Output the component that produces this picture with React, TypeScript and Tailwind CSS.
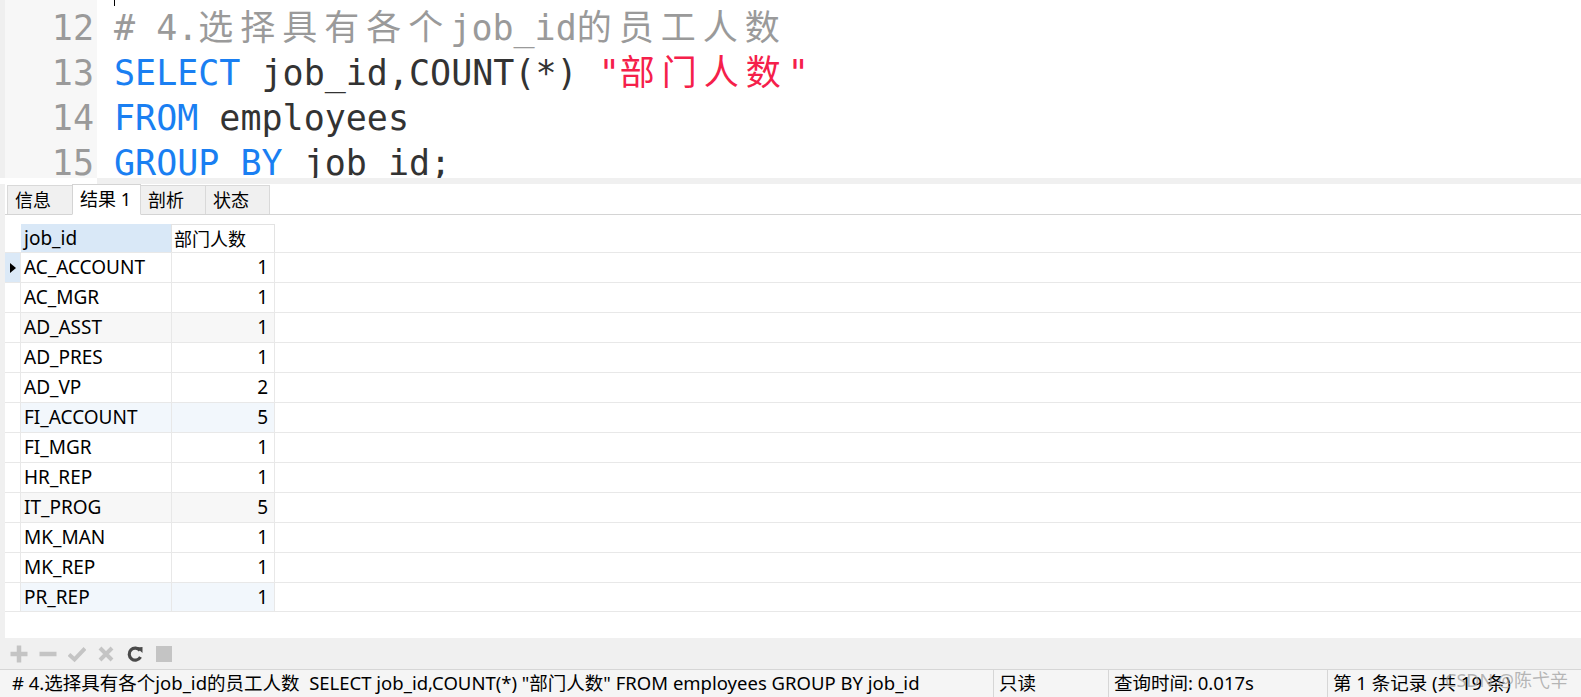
import React from "react";

const rows: [string, number][] = [
  ["AC_ACCOUNT", 1],
  ["AC_MGR", 1],
  ["AD_ASST", 1],
  ["AD_PRES", 1],
  ["AD_VP", 2],
  ["FI_ACCOUNT", 5],
  ["FI_MGR", 1],
  ["HR_REP", 1],
  ["IT_PROG", 5],
  ["MK_MAN", 1],
  ["MK_REP", 1],
  ["PR_REP", 1],
];

const rowBg = (i: number) => {
  if (i % 3 !== 2) return "bg-white";
  return i % 6 === 2 ? "bg-[#f7f7f7]" : "bg-[#f2f7fc]";
};

const Cjk = ({ children }: { children: React.ReactNode }) => (
  <span className="tracking-[7px]">{children}</span>
);

const mono = "font-['DejaVu_Sans_Mono','Noto_Sans_CJK_SC',monospace]";
const ui = "font-['Noto_Sans','Noto_Sans_CJK_SC',sans-serif]";

const Tab = ({ label, w, active }: { label: string; w: string; active?: boolean }) => (
  <div
    className={
      active
        ? `${w} h-[31px] -mb-px -ml-px pl-[7px] bg-white border border-[#d4d4d4] border-b-white flex items-center text-[18px] text-black`
        : `${w} h-[29px] -ml-px first:ml-0 pl-[7px] bg-[#f0f0f0] border border-b-0 border-[#d9d9d9] flex items-center text-[18px] text-black`
    }
  >
    {label}
  </div>
);

const ToolIcon = ({ children }: { children: React.ReactNode }) => (
  <svg width="18" height="18" viewBox="0 0 18 18" className="shrink-0">
    {children}
  </svg>
);

export default function App() {
  return (
    <div className={`w-[1581px] h-[697px] flex flex-col overflow-hidden bg-white ${ui}`}>
      {/* BEGIN: Editor */}
      <div className={`h-[178px] flex overflow-hidden ${mono} text-[35px] leading-[45px]`}>
        <div className="w-[5px] bg-[#efefef]" />
        <div className="w-[92px] bg-[#f7f7f7] pt-[6px] pr-[3px] text-right text-[#9a9a9a]">
          <div>12</div>
          <div>13</div>
          <div>14</div>
          <div>15</div>
        </div>
        <div className="relative flex-1 pt-[6px] pl-[17px] whitespace-pre text-[#333333]">
          <div className="absolute left-[17px] top-0 w-px h-[6px] bg-black" />
          <div className="text-[#9a9a9a]">
            # 4.<Cjk>选择具有各个</Cjk>job_id<Cjk>的员工人数</Cjk>
          </div>
          <div>
            <span className="text-[#1a7ff2]">SELECT</span> job_id,COUNT(*){" "}
            <span className="text-[#f5204a]">
              "<Cjk>部门人数</Cjk>"
            </span>
          </div>
          <div>
            <span className="text-[#1a7ff2]">FROM</span> employees
          </div>
          <div>
            <span className="text-[#1a7ff2]">GROUP BY</span> job_id;
          </div>
        </div>
      </div>
      <div className="h-[6px] flex">
        <div className="w-[97px] bg-white" />
        <div className="flex-1 bg-[#f0f0f0]" />
      </div>
      {/* END: Editor */}

      {/* BEGIN: Result panel */}
      <div className="h-[454px] flex">
        <div className="w-[5px] bg-[#f0f0f0]" />
        <div className="flex-1 flex flex-col">
          <div className="h-[31px] flex items-end pl-[2px] border-b border-[#d4d4d4]">
            <Tab label="信息" w="w-[66px]" />
            <Tab label="结果 1" w="w-[69px]" active />
            <Tab label="剖析" w="w-[66px]" />
            <Tab label="状态" w="w-[65px]" />
          </div>
          <div className="flex-1 pt-[9px] text-[19px] text-black leading-none">
            <div className="grid grid-cols-[16px_151px_103px] h-[28px]">
              <div />
              <div className="bg-[#d9e8f7] border-r border-[#e3e3e3] flex items-center pl-[3px]">
                job_id
              </div>
              <div className="border-t border-r border-[#e3e3e3] flex items-center pl-[2px] text-[18px]">
                部门人数
              </div>
            </div>
            {rows.map(([id, count], i) => (
              <div
                key={id}
                className={`grid grid-cols-[16px_151px_103px] h-[30px] border-t border-[#e8e8e8] ${
                  i === rows.length - 1 ? "border-b" : ""
                }`}
              >
                <div
                  className={`border-r border-[#e8e8e8] flex items-center justify-center ${
                    i === 0 ? "bg-[#dbe9f7]" : "bg-white"
                  }`}
                >
                  {i === 0 && (
                    <svg width="6" height="10" viewBox="0 0 6 10">
                      <path d="M0 0 L6 5 L0 10 Z" fill="#000" />
                    </svg>
                  )}
                </div>
                <div className={`${rowBg(i)} border-r border-[#e8e8e8] flex items-center pl-[3px]`}>
                  {id}
                </div>
                <div className={`${rowBg(i)} border-r border-[#e8e8e8] flex items-center justify-end pr-[6px]`}>
                  {count}
                </div>
              </div>
            ))}
          </div>
        </div>
      </div>
      {/* END: Result panel */}

      {/* BEGIN: Toolbar */}
      <div className="h-[31px] bg-[#f0f0f0] flex items-center pl-[10px] gap-[11px]">
        <ToolIcon>
          <path d="M9 0.5v17M0.5 9h17" stroke="#c4c4c4" strokeWidth="4.5" />
        </ToolIcon>
        <ToolIcon>
          <path d="M0.5 9h17" stroke="#c4c4c4" strokeWidth="4.5" />
        </ToolIcon>
        <ToolIcon>
          <path d="M1 9.5l5.5 5L17 3.5" stroke="#c4c4c4" strokeWidth="4" fill="none" />
        </ToolIcon>
        <ToolIcon>
          <path d="M3 3l12 12M15 3L3 15" stroke="#c4c4c4" strokeWidth="4" />
        </ToolIcon>
        <ToolIcon>
          <path d="M14 5.5A6 6 0 1 0 14.5 12" stroke="#4a4a4a" strokeWidth="3.2" fill="none" />
          <path d="M10.5 2.5L16.5 2v6z" fill="#4a4a4a" />
        </ToolIcon>
        <ToolIcon>
          <rect x="1" y="1" width="16" height="16" fill="#c4c4c4" />
        </ToolIcon>
      </div>
      {/* END: Toolbar */}

      {/* BEGIN: Status bar */}
      <div className="relative h-[28px] border-t border-[#d6d6d6] bg-[#f5f5f5] flex text-[18.5px] text-black whitespace-pre leading-none">
        <div className="w-[993px] flex items-center pl-[12px] overflow-hidden">
          # 4.选择具有各个job_id的员工人数  SELECT job_id,COUNT(*) "部门人数" FROM employees GROUP BY job_id
        </div>
        <div className="w-[115px] border-l border-[#d6d6d6] flex items-center pl-[5px]">只读</div>
        <div className="w-[219px] border-l border-[#d6d6d6] flex items-center pl-[5px]">
          查询时间: 0.017s
        </div>
        <div className="flex-1 border-l border-[#d6d6d6] flex items-center pl-[5px]">
          第 1 条记录 (共 19 条)
        </div>
        <div className="absolute right-[13px] top-[1px] text-[18px] leading-none text-[#a0a0a0]/75">
          CSDN @陈弋辛
        </div>
      </div>
      {/* END: Status bar */}
    </div>
  );
}
